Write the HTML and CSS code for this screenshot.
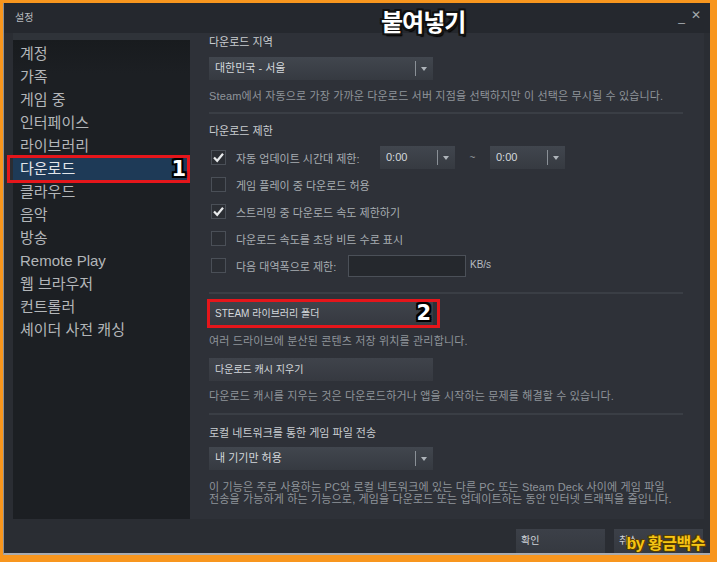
FILE: index.html
```html
<!DOCTYPE html>
<html lang="ko">
<head>
    <meta charset="UTF-8">
    <title>설정</title>
    <link rel="stylesheet" href="styles.css">
</head>
<body>

    <div class="window">
        <!-- Barra de título -->
        <div class="titlebar">
            <span class="title">설정</span>
            <span class="caption">붙여넣기</span>
            <span class="controls"><span class="min">_</span><span class="close">✕</span></span>
        </div>

        <div class="main">
            <!-- Menu lateral -->
            <nav class="sidebar">
                <div class="item">계정</div>
                <div class="item">가족</div>
                <div class="item">게임 중</div>
                <div class="item">인터페이스</div>
                <div class="item">라이브러리</div>
                <div class="item selected">다운로드<span class="num num1">1</span></div>
                <div class="item">클라우드</div>
                <div class="item">음악</div>
                <div class="item">방송</div>
                <div class="item">Remote Play</div>
                <div class="item">웹 브라우저</div>
                <div class="item">컨트롤러</div>
                <div class="item">셰이더 사전 캐싱</div>
            </nav>

            <!-- Conteúdo -->
            <div class="panel">
                <div class="heading">다운로드 지역</div>
                <div class="dropdown wide">
                    <span>대한민국 - 서울</span>
                    <span class="arrow"></span>
                </div>
                <div class="desc">Steam에서 자동으로 가장 가까운 다운로드 서버 지점을 선택하지만 이 선택은 무시될 수 있습니다.</div>

                <div class="divider"></div>

                <div class="heading h2">다운로드 제한</div>
                <div class="checks">
                    <div class="row">
                        <span class="box checked"><svg viewBox="0 0 15 15" width="15" height="15"><path d="M3 7.5 L6.2 10.8 L12 3.8" fill="none" stroke="#e8eaec" stroke-width="2.2"/></svg></span>
                        <span class="label">자동 업데이트 시간대 제한:</span>
                        <div class="dropdown time first"><span>0:00</span><span class="arrow"></span></div>
                        <span class="tilde">~</span>
                        <div class="dropdown time"><span>0:00</span><span class="arrow"></span></div>
                    </div>
                    <div class="row">
                        <span class="box"></span>
                        <span class="label">게임 플레이 중 다운로드 허용</span>
                    </div>
                    <div class="row">
                        <span class="box checked"><svg viewBox="0 0 15 15" width="15" height="15"><path d="M3 7.5 L6.2 10.8 L12 3.8" fill="none" stroke="#e8eaec" stroke-width="2.2"/></svg></span>
                        <span class="label">스트리밍 중 다운로드 속도 제한하기</span>
                    </div>
                    <div class="row">
                        <span class="box"></span>
                        <span class="label">다운로드 속도를 초당 비트 수로 표시</span>
                    </div>
                    <div class="row">
                        <span class="box"></span>
                        <span class="label">다음 대역폭으로 제한:</span>
                        <span class="input"></span>
                        <span class="unit">KB/s</span>
                    </div>
                </div>

                <div class="divider d2"></div>

                <div class="button marked">STEAM 라이브러리 폴더<span class="num num2">2</span></div>
                <div class="desc">여러 드라이브에 분산된 콘텐츠 저장 위치를 관리합니다.</div>
                <div class="button b2">다운로드 캐시 지우기</div>
                <div class="desc d3">다운로드 캐시를 지우는 것은 다운로드하거나 앱을 시작하는 문제를 해결할 수 있습니다.</div>

                <div class="divider d4"></div>

                <div class="heading h3">로컬 네트워크를 통한 게임 파일 전송</div>
                <div class="dropdown wide dd3">
                    <span>내 기기만 허용</span>
                    <span class="arrow"></span>
                </div>
                <div class="desc two">이 기능은 주로 사용하는 PC와 로컬 네트워크에 있는 다른 PC 또는 Steam Deck 사이에 게임 파일<br>전송을 가능하게 하는 기능으로, 게임을 다운로드 또는 업데이트하는 동안 인터넷 트래픽을 줄입니다.</div>
            </div>
        </div>

        <!-- Rodapé -->
        <div class="footer">
            <div class="fbutton">확인</div>
            <div class="fbutton">취소</div>
            <span class="credit">by 황금백수</span>
        </div>
    </div>

</body>
</html>
```

FILE: styles.css
```css
/* Estilos gerais */
body {
    margin: 0;
    width: 717px;
    height: 562px;
    overflow: hidden;
    background-color: #f8961e;
    font-family: "Liberation Sans", "Noto Sans CJK KR", sans-serif;
}

.window {
    position: relative;
    margin: 3px 0 0 3px;
    width: 707px;
    height: 552px;
    background-color: #2a2d33;
    border-left: 1px solid #8d9095;
    border-bottom: 2px solid #a9abae;
    box-sizing: border-box;
    display: flex;
    flex-direction: column;
}

/* Barra de título */
.titlebar {
    height: 30px;
    position: relative;
    background-color: #25282e;
}

.title {
    position: absolute;
    left: 11px;
    top: 6px;
    font-size: 10px;
    color: #b7bbbf;
}

.caption {
    position: absolute;
    left: 377px;
    top: 0px;
    font-size: 24px;
    font-weight: bold;
    color: #fff;
    letter-spacing: -1px;
    text-shadow: 2px 0 0 #111, -2px 0 0 #111, 0 2px 0 #111, 0 -2px 0 #111,
                 2px 2px 0 #111, -2px -2px 0 #111, 2px -2px 0 #111, -2px 2px 0 #111,
                 2px 3px 1px #000;
}

.controls {
    position: absolute;
    right: 9px;
    top: 5px;
    color: #a6abb0;
    font-size: 12px;
}

.controls .min {
    margin-right: 6px;
    position: relative;
    top: 2px;
}

/* Área principal */
.main {
    display: flex;
    height: 486px;
    margin-left: 9px;
}

.sidebar {
    width: 177px;
    flex-shrink: 0;
    background: linear-gradient(#2f3339 0, #2f3339 7px, #181b1e 7px, #1c1f23 40px, #1c1f23 100%);
    padding-top: 9px;
    box-sizing: border-box;
}

.sidebar .item {
    position: relative;
    height: 23px;
    line-height: 23px;
    padding-left: 7px;
    font-size: 15px;
    color: #b3b6b9;
}

.sidebar .item.selected {
    background-color: #1e3a57;
    color: #e2e6ea;
}

.sidebar .item.selected::after {
    content: "";
    position: absolute;
    left: -6px;
    right: 0;
    top: -2px;
    bottom: -3px;
    border: 3px solid #e5161b;
}

.num {
    position: absolute;
    font-family: "DejaVu Sans", sans-serif;
    font-weight: bold;
    color: #fff;
    z-index: 2;
    text-shadow: 2px 0 0 #000, -2px 0 0 #000, 0 2px 0 #000, 0 -2px 0 #000,
                 2px 2px 0 #000, -2px -2px 0 #000, 2px -2px 0 #000, -2px 2px 0 #000;
}

.num1 {
    right: 4px;
    top: 0;
    font-size: 21px;
    line-height: 24px;
}

.num2 {
    right: 2px;
    top: -1px;
    font-size: 21px;
    line-height: 25px;
}

/* Painel de conteúdo */
.panel {
    flex: 1;
    background-color: #2e3138;
    padding: 2px 20px 0 19px;
    margin-right: 6px;
    font-size: 11px;
}

.heading {
    line-height: 14px;
    color: #c9cdd1;
    font-size: 11px;
}

.h2 { margin-top: 10px; }
.h3 { margin-top: 11px; }

.desc {
    margin-top: 9px;
    line-height: 14px;
    color: #8e949a;
    white-space: nowrap;
    letter-spacing: 0.15px;
}

.d3 { margin-top: 8px; }

.desc.two {
    margin-top: 11px;
    line-height: 12px;
}

.divider {
    margin-top: 9px;
    height: 2px;
    background-color: #3a3e45;
    width: 474px;
}

.d2 { margin-top: 15px; }
.d4 { margin-top: 10px; }

/* Listas suspensas */
.dropdown {
    position: relative;
    height: 23px;
    line-height: 23px;
    background: linear-gradient(#41464e, #363a41);
    color: #d4d8dc;
    padding-left: 6px;
    box-sizing: border-box;
}

.dropdown.wide {
    width: 224px;
    margin-top: 8px;
}

.dd3 { margin-top: 7px !important; }

.dropdown .arrow {
    position: absolute;
    right: 0;
    top: 4px;
    width: 17px;
    height: 15px;
    border-left: 1px solid #8a9097;
}

.dropdown .arrow::after {
    content: "";
    position: absolute;
    left: 5px;
    top: 6px;
    border-left: 3.5px solid transparent;
    border-right: 3.5px solid transparent;
    border-top: 4px solid #aeb4ba;
}

.dropdown.time {
    width: 75px;
    font-size: 11px;
}

/* Caixas de seleção */
.checks {
    margin-top: 8px;
    display: flex;
    flex-direction: column;
    gap: 4px;
}

.row {
    display: flex;
    align-items: center;
    height: 23px;
}

.box {
    width: 13px;
    height: 13px;
    margin-left: 2px;
    border: 1px solid #4a4f57;
    background-color: #2b2e34;
    flex-shrink: 0;
    position: relative;
}

.box svg {
    position: absolute;
    left: -1px;
    top: -1px;
}

.label {
    margin-left: 10px;
    color: #a7adb2;
    font-size: 11px;
    white-space: nowrap;
}

.row:first-child .label { width: 134px; }
.row:first-child .dropdown.first { margin-left: 10px; }
.row:last-child .label { width: 109px; }

.tilde {
    width: 35px;
    text-align: center;
    color: #8e949a;
    font-size: 10px;
}

.input {
    width: 116px;
    height: 20px;
    margin-left: 3px;
    border: 1px solid #4b5058;
    background-color: #25282d;
}

.unit {
    margin-left: 4px;
    margin-top: -3px;
    color: #b6bbc0;
    font-size: 10px;
}

/* Botões */
.button {
    position: relative;
    width: 224px;
    height: 23px;
    line-height: 23px;
    margin-top: 8px;
    padding-left: 6px;
    box-sizing: border-box;
    background: linear-gradient(#3f434b, #363940);
    color: #d4d8dc;
    font-size: 10px;
}

.button.b2 { margin-top: 10px; }

.button.marked::after {
    content: "";
    position: absolute;
    left: -2px;
    right: -7px;
    top: -3px;
    bottom: -3px;
    border: 3px solid #e5161b;
}

/* Rodapé */
.footer {
    flex: 1;
    position: relative;
    display: flex;
    justify-content: flex-end;
    gap: 9px;
    padding: 10px 7px 0 0;
}

.fbutton {
    width: 89px;
    height: 24px;
    line-height: 24px;
    padding-left: 5px;
    box-sizing: border-box;
    background: linear-gradient(#3c4048, #353940);
    color: #cfd3d7;
    font-size: 10px;
}

.credit {
    position: absolute;
    right: 5px;
    top: 11px;
    font-size: 16px;
    font-weight: bold;
    color: #f6c614;
    letter-spacing: -0.5px;
    text-shadow: 1px 0 0 #5a3d00, -1px 0 0 #5a3d00, 0 1px 0 #5a3d00, 0 -1px 0 #5a3d00,
                 1px 1px 0 #5a3d00, -1px -1px 0 #5a3d00;
}
```
